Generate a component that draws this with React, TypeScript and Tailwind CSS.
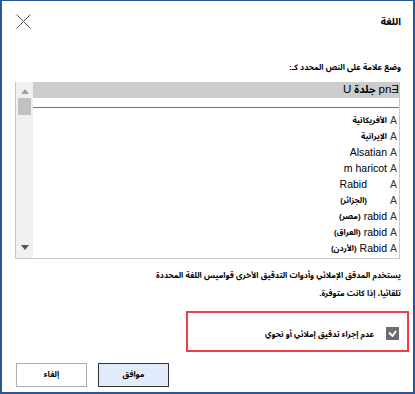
const rows = [
	{ ar: 'الأفريكانية', en: '', pad: false },
	{ ar: 'الإيرانية', en: '', pad: false },
	{ ar: '', en: 'Alsatian', pad: false },
	{ ar: '', en: 'm haricot', pad: false },
	{ ar: '', en: 'Rabid', pad: true },
	{ ar: '(الجزائر)', en: '', pad: true },
	{ ar: '(مصر)', en: 'rabid', pad: false },
	{ ar: '(العراق)', en: 'rabid', pad: false },
	{ ar: '(الأردن)', en: 'Rabid', pad: false },
];

function Ar({ children, className = '' }: { children: React.ReactNode; className?: string }) {
	return <span className={'text-[8px] font-bold ' + className}>{children}</span>;
}

function ListRow({ ar, en, pad }: { ar: string; en: string; pad: boolean }) {
	return (
		<div className="flex h-4 items-center justify-start pr-[2px]">
			<span className="w-[9px] text-[#333]">A</span>
			<span className={'flex items-center gap-[3px] ' + (pad ? 'pr-[21px]' : 'pr-[1px]')}>
				{en && <span>{en}</span>}
				{ar && <Ar>{ar}</Ar>}
			</span>
		</div>
	);
}

export default function App() {
	return (
		<div
			dir="rtl"
			className="h-[394px] w-[415px] border-t border-r-2 border-b-2 border-l-2 border-[#2b579a] bg-white font-['Liberation_Sans','Noto_Sans_Arabic_UI','Noto_Sans_Arabic','DejaVu_Sans_Condensed','DejaVu_Sans',sans-serif] text-[10.5px] text-black"
		>
			<div className="flex h-[38px] items-center justify-between pr-[12px] pl-[14px] pt-[2px]">
				<Ar className="text-[10px]">اللغة</Ar>
				<svg width="15" height="15" viewBox="0 0 15 15">
					<path d="M0.5 0.5 L14.5 14.5 M14.5 0.5 L0.5 14.5" stroke="#555" strokeWidth="1" />
				</svg>
			</div>

			<div className="px-[12px]">
				<div className="mt-[19px] h-[16px] leading-[16px]">
					<Ar>وضع علامة على النص المحدد كـ:</Ar>
				</div>

				<div className="mt-[8px] mr-[1px] ml-[1px] flex h-[177px] border-r border-b border-l border-[#c8c8c8]">
					<div className="flex flex-1 flex-col">
						<div className="flex h-4 items-center bg-[#cccccc]">
							<span dir="ltr" className="flex items-center text-[11.5px]">
								<span>U</span>
								<Ar className="mx-[3px] text-[10.5px]">جلدة</Ar>
								<span>pnƎ</span>
							</span>
						</div>
						<div className="mt-[9px] h-px bg-[#707070]" />
						<div className="mt-[5px] flex flex-col">
							{rows.map((r) => (
								<ListRow key={r.ar + r.en} ar={r.ar} en={r.en} pad={r.pad} />
							))}
						</div>
					</div>
					<div className="flex w-[17px] flex-col items-center bg-[#f0f0f0]">
						<svg width="8" height="5" viewBox="0 0 8 5" className="mt-[7px]">
							<path d="M0 5 L4 0 L8 5 Z" fill="#a0a0a0" />
						</svg>
						<div className="mt-[4px] h-[17px] w-[13px] bg-[#c1c1c1]" />
						<div className="flex-1" />
						<svg width="8" height="5" viewBox="0 0 8 5" className="mb-[8px]">
							<path d="M0 0 L8 0 L4 5 Z" fill="#555" />
						</svg>
					</div>
				</div>

				<p className="mt-[7px] w-[252px] leading-[17px]">
					<Ar>يستخدم المدقق الإملائي وأدوات التدقيق الأخرى قواميس اللغة المحددة تلقائيا، إذا كانت متوفرة.</Ar>
				</p>
			</div>

			<div className="mt-[9px] mr-[4px] flex h-[41px] w-[223px] items-start gap-[12px] border-2 border-[#ef3e4a] pt-[14px] pr-[8px]">
				<span className="flex h-[13px] w-[13px] items-center justify-center bg-[#6d6d6d]">
					<svg width="9" height="7" viewBox="0 0 9 7">
						<path d="M1 2.5 L4.5 6 L8 1" stroke="#fff" strokeWidth="1.8" fill="none" />
					</svg>
				</span>
				<span className="leading-[13px]">
					<Ar>عدم إجراء تدقيق إملائي أو نحوي</Ar>
				</span>
			</div>

			<div className="mt-[11px] flex gap-[11px] pr-[244px]">
				<button className="flex h-[24px] w-[71px] items-center justify-center border border-[#333] bg-[#e1ecfa]">
					<Ar>موافق</Ar>
				</button>
				<button className="flex h-[24px] w-[71px] items-center justify-center border border-[#adadad] bg-white">
					<Ar>إلغاء</Ar>
				</button>
			</div>
		</div>
	);
}
